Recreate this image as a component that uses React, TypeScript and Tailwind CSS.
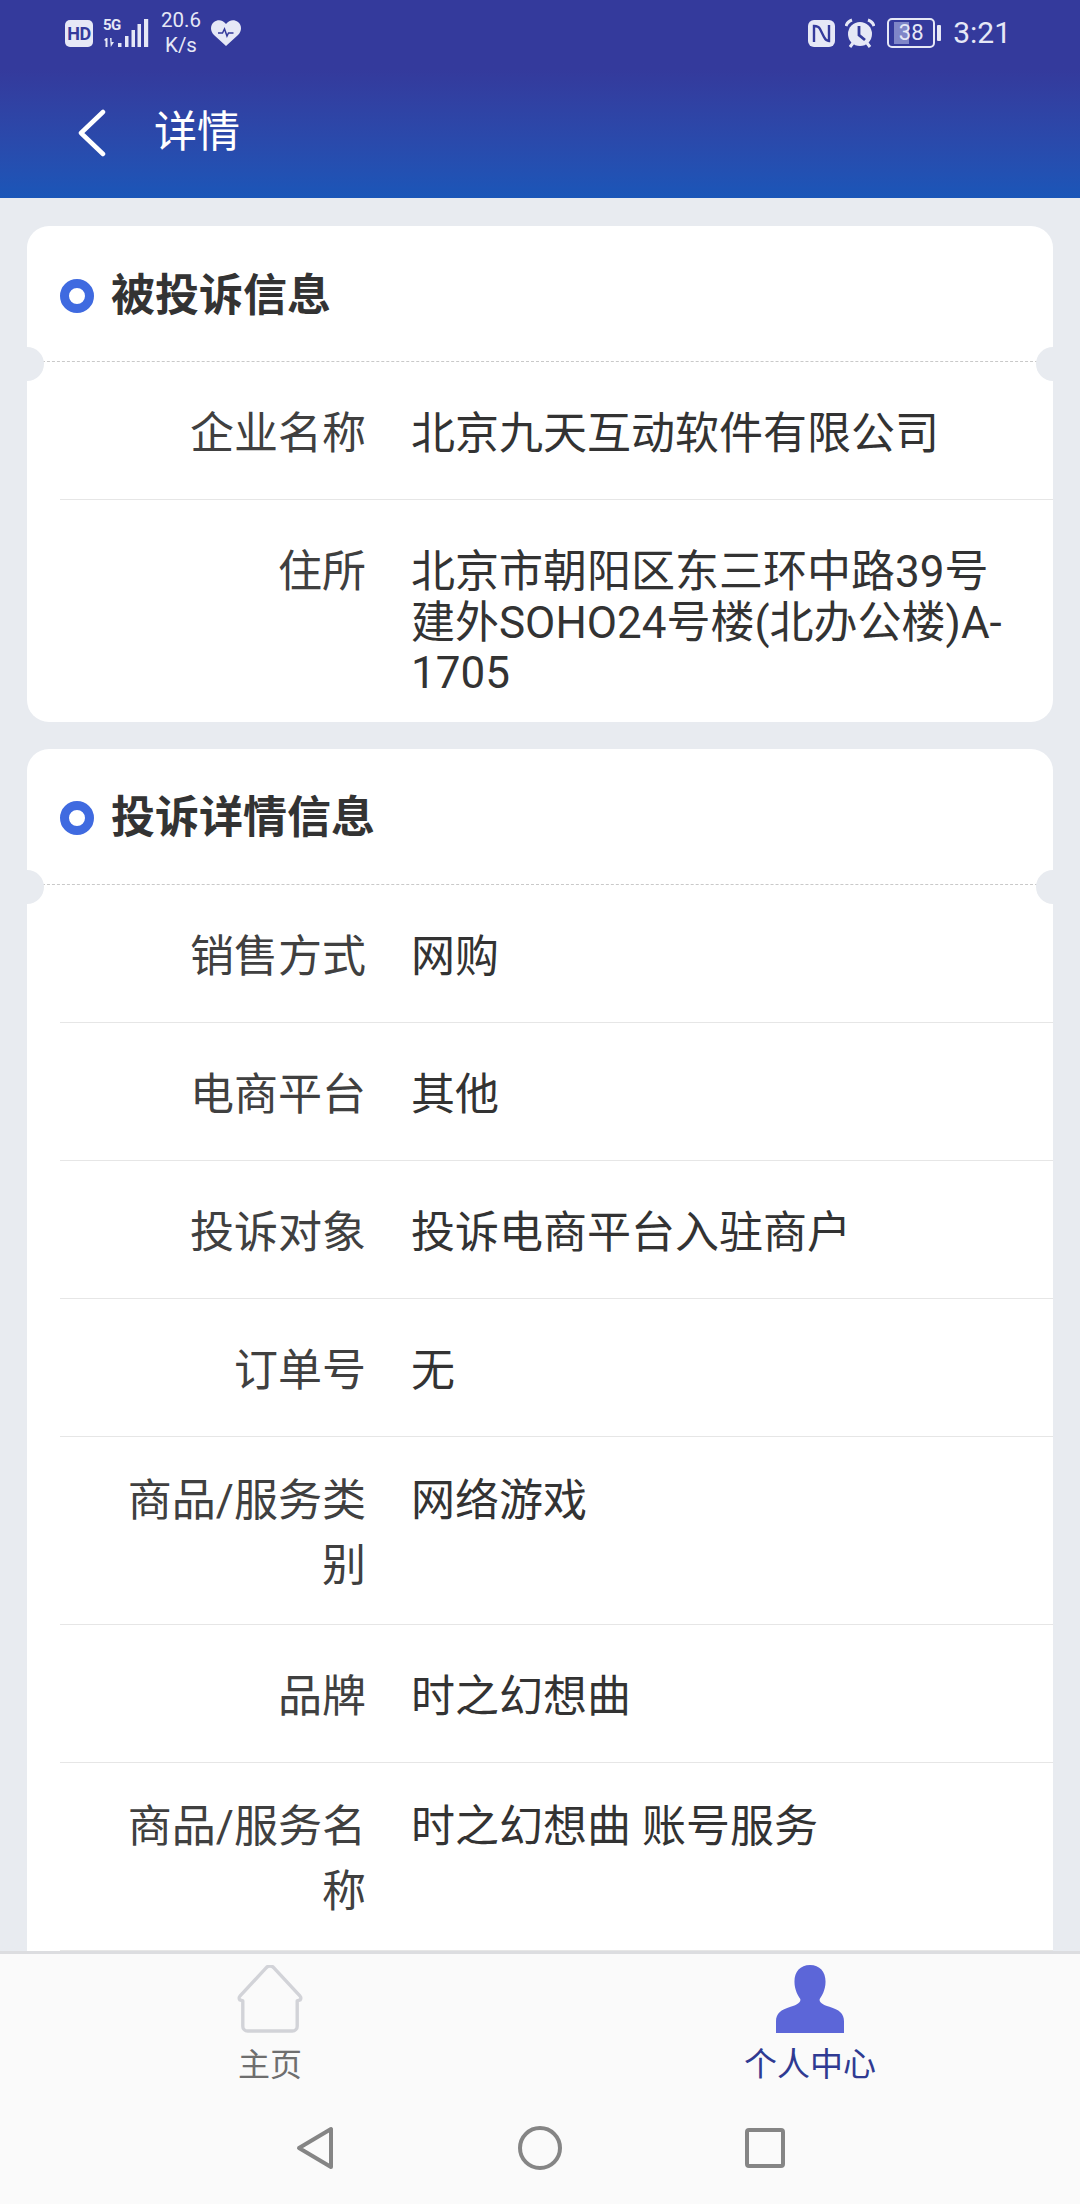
const FONT = "font-['Roboto','Noto_Sans_CJK_SC',sans-serif]";

function Notch({ side }: { side: "left" | "right" }) {
  return (
    <span
      className={`absolute top-[-15px] w-[34px] h-[34px] rounded-full bg-[#e8ebf0] ${
        side === "left" ? "left-[-17px]" : "right-[-17px]"
      }`}
    />
  );
}

// rows whose label wraps on two lines sit higher and use a looser line height
function Row({ label, value, wrap, last }: { label: string; value: string; wrap?: boolean; last?: boolean }) {
  return (
    <div className={`ml-[33px] min-h-[138px] flex ${last ? "" : "border-b border-[#e6e6e6]"}`}>
      <div
        className={`w-[306px] shrink-0 pl-[56px] text-right text-[44px] text-[#404040] ${
          wrap ? "pt-[32px] pb-[25px] leading-[65px]" : "pt-[47px] pb-[23px] leading-[50.5px]"
        }`}
      >
        {label}
      </div>
      <div
        className={`flex-1 pl-[45px] pr-[30px] pb-[23px] text-[44px] leading-[50.5px] text-[#333333] ${
          wrap ? "pt-[39px]" : "pt-[47px]"
        }`}
      >
        {value}
      </div>
    </div>
  );
}

function Card({ title, children }: { title: string; children: React.ReactNode }) {
  return (
    <div className="mx-[27px] mb-[27px] rounded-[22px] bg-white overflow-hidden">
      <div className="h-[135px] flex items-center pl-[33px] pt-[4px] gap-[17px]">
        <span className="w-[34px] h-[34px] rounded-full border-[9px] border-[#3f6ae0]" />
        <span className="text-[44px] font-bold text-[#333333]">{title}</span>
      </div>
      <div className="relative border-t border-dashed border-[#c9c9c9]">
        <Notch side="left" />
        <Notch side="right" />
      </div>
      {children}
    </div>
  );
}

function StatusBar() {
  return (
    <div className="h-[66px] flex items-center justify-between pl-[65px] pr-[69px] text-[#e6e8f6]">
      <div className="flex items-center">
        <span className="w-[28px] h-[27px] rounded-[5px] bg-[#e6e8f6] text-[#343a9c] text-[18px] font-bold leading-[27px] text-center tracking-[-0.5px]">
          HD
        </span>
        <div className="ml-[10px] w-[46px] h-[28px] relative">
          <span className="absolute left-0 top-[-3px] text-[15px] leading-[18px] font-bold tracking-[-0.5px]">5G</span>
          <svg viewBox="0 0 46 28" className="w-[46px] h-[28px]" fill="currentColor">
            <path d="M1 21l2-2h1.500v9H2.500v-6zM7 19h1.600v4l2.400 0-3.200 5z" />
            <rect x="15" y="24" width="3.500" height="4" />
            <rect x="22" y="17" width="3.500" height="11" />
            <rect x="28.500" y="11" width="3.500" height="17" />
            <rect x="34.500" y="5" width="3.500" height="23" />
            <rect x="41" y="0" width="4.200" height="28" />
          </svg>
        </div>
        <div className="ml-[11px] w-[42px] text-center text-[20.5px] leading-[25px]">
          20.6
          <br />
          K/s
        </div>
        <svg viewBox="0 0 30 26" className="ml-[9px] w-[30px] h-[26px]">
          <path
            d="M15 26 3 15C-1 11-1 5 3 2c4-3 9-2 12 2 3-4 8-5 12-2 4 3 4 9 0 13z"
            fill="currentColor"
          />
          <path d="M7 13h4.500l2-4 2.500 7 1.500-3h5" fill="none" stroke="#343a9c" strokeWidth="1.500" />
        </svg>
      </div>
      <div className="flex items-center">
        <svg viewBox="0 0 27 27" className="w-[27px] h-[27px]">
          <rect width="27" height="27" rx="6" fill="currentColor" />
          <path
            d="M6 22V6c3 0 5 1 6 3l4 8c1 2 3 4 5 4V5"
            fill="none"
            stroke="#343a9c"
            strokeWidth="2.400"
          />
        </svg>
        <svg viewBox="0 0 30 30" className="ml-[10px] w-[30px] h-[30px]">
          <circle cx="15" cy="16" r="12" fill="currentColor" />
          <path d="M14 8v9l6 5" fill="none" stroke="#343a9c" strokeWidth="2.800" />
          <path d="M1 8c1-3 3-5 6-6M29 8c-1-3-3-5-6-6M5 29l3-4M25 29l-3-4" fill="none" stroke="currentColor" strokeWidth="3" />
        </svg>
        <div className="ml-[12px] relative w-[48px] h-[30px] rounded-[5px] border-[2.5px] border-[#e6e8f6] overflow-hidden">
          <div className="absolute left-[5px] top-[2px] bottom-[2px] w-[15px] bg-[#7f86c8]" />
          <div className="relative text-center text-[22px] leading-[25px]">38</div>
        </div>
        <span className="ml-[2px] w-[4px] h-[16px] rounded-[1px] bg-[#e6e8f6]" />
        <span className="ml-[12px] text-[30px] leading-[34px]">3:21</span>
      </div>
    </div>
  );
}

export default function App() {
  return (
    <div className={`h-[2204px] w-[1080px] flex flex-col overflow-hidden bg-[#e8ebf0] ${FONT}`}>
      <header className="h-[198px] shrink-0 bg-gradient-to-b from-[#343a9c] from-[35%] to-[#1a56b8]">
        <StatusBar />
        <div className="h-[132px] flex items-center pl-[77px] pt-[1px]">
          <svg viewBox="0 0 30 48" className="w-[30px] h-[48px]" fill="none" stroke="white" strokeWidth="4.500" strokeLinecap="round" strokeLinejoin="round">
            <path d="M26 3 4 24l22 21" />
          </svg>
          <span className="ml-[47px] text-[43px] text-white">详情</span>
        </div>
      </header>

      <main className="flex-1 min-h-0 overflow-hidden pt-[28px]">
        <Card title="被投诉信息">
          <Row label="企业名称" value="北京九天互动软件有限公司" />
          <Row label="住所" value="北京市朝阳区东三环中路39号建外SOHO24号楼(北办公楼)A-1705" last />
        </Card>
        <Card title="投诉详情信息">
          <Row label="销售方式" value="网购" />
          <Row label="电商平台" value="其他" />
          <Row label="投诉对象" value="投诉电商平台入驻商户" />
          <Row label="订单号" value="无" />
          <Row label="商品/服务类别" value="网络游戏" wrap />
          <Row label="品牌" value="时之幻想曲" />
          <Row label="商品/服务名称" value="时之幻想曲 账号服务" wrap />
          <Row label="" value="" last />
        </Card>
      </main>

      <footer className="h-[253px] shrink-0 flex flex-col bg-[#fafafa] border-t-[3px] border-[#dcdde0]">
        <div className="h-[134px] shrink-0 flex">
          <div className="w-1/2 flex flex-col items-center pt-[11px]">
            <svg viewBox="0 0 70 70" className="w-[70px] h-[68px]" fill="none" stroke="#d2d3d8" strokeWidth="3.500" strokeLinejoin="round">
              <path d="M31 3a5 5 0 0 1 8 0l27 29c1 1 1 3 0 4l-3 1v26a5 5 0 0 1-5 5H12a5 5 0 0 1-5-5V37l-3-1c-1-1-1-3 0-4z" />
            </svg>
            <span className="mt-[12px] text-[32px] leading-[40px] text-[#6e6e6e]">主页</span>
          </div>
          <div className="w-1/2 flex flex-col items-center pt-[11px]">
            <svg viewBox="0 0 70 70" className="w-[70px] h-[68px]" fill="#5c66d8">
              <path d="M35 0c10 0 16 7 16 17 0 9-4 15-6 18-1 3 3 6 10 8 10 3 15 7 15 15v12H0V58c0-8 5-12 15-15 7-2 11-5 10-8-2-3-6-9-6-18C19 7 25 0 35 0z" />
            </svg>
            <span className="mt-[12px] text-[33px] leading-[40px] text-[#2f3a92]">个人中心</span>
          </div>
        </div>
        <div className="flex-1 flex items-center justify-center gap-[183px] pt-[4px]">
          <svg viewBox="0 0 40 44" className="w-[40px] h-[44px]" fill="none" stroke="#858585" strokeWidth="4" strokeLinejoin="round">
            <path d="M36 3v38L4 22z" />
          </svg>
          <svg viewBox="0 0 44 44" className="w-[44px] h-[44px]">
            <circle cx="22" cy="22" r="20" fill="none" stroke="#858585" strokeWidth="4" />
          </svg>
          <svg viewBox="0 0 40 40" className="w-[40px] h-[40px]">
            <rect x="2" y="2" width="36" height="36" rx="2" fill="none" stroke="#858585" strokeWidth="4" />
          </svg>
        </div>
      </footer>
    </div>
  );
}
